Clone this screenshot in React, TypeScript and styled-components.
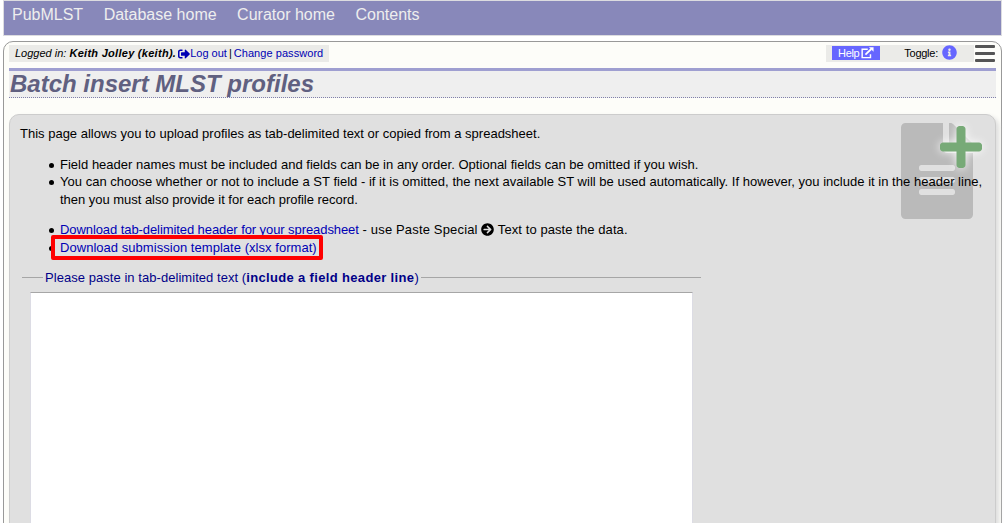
import React from "react";
import styled, { createGlobalStyle } from "styled-components";
import {
  FaArrowCircleRight,
  FaFileAlt,
  FaInfoCircle,
  FaPlus,
  FaSignOutAlt,
} from "react-icons/fa";

const Global = createGlobalStyle`
  * { box-sizing: border-box; }
  body {
    margin: 0;
    background: #fff;
    color: #000;
    font-family: "Liberation Sans", Arial, sans-serif;
    font-size: 13px;
    overflow: hidden;
  }
  a { color: #0000b4; text-decoration: none; }
`;

const Page = styled.div`
  height: 523px;
  padding: 0 3px;
  overflow: hidden;
  display: flex;
  flex-direction: column;
  gap: 5px;
`;

const NavBar = styled.nav`
  flex: none;
  height: 36px;
  background: #8888ba;
  border: 1px solid #dcdce0;
  display: flex;
  gap: 20.5px;
  padding: 4px 8px;
`;

const NavLink = styled.a`
  && { color: #eee; }
  font-size: 16px;
  line-height: 19px;
  white-space: nowrap;
`;

const Frame = styled.main`
  flex: none;
  height: 520px;
  background: #fdfdf9;
  border: 1px solid #999;
  border-radius: 10px;
  padding: 3px 5px;
`;

const TopRow = styled.div`
  display: flex;
  justify-content: space-between;
  height: 17px;
`;

const LoginBox = styled.div`
  width: 320px;
  padding-left: 6px;
  background: #ebebe8;
  font-size: 11px;
  line-height: 17px;
  white-space: nowrap;
  display: flex;
  align-items: center;
`;

const UserName = styled.b`
  letter-spacing: 0.28px;
`;

const LogOut = styled.a`
  display: flex;
  align-items: center;
  margin: 0 2px 0 2px;
`;

const ChangePassword = styled.a`
  margin-left: 2px;
  letter-spacing: 0.06px;
`;

const Tools = styled.div`
  display: flex;
  align-items: center;
  width: 170px;
`;

const ToolStrip = styled.div`
  width: 148px;
  height: 17px;
  padding: 0 17px 0 6px;
  background: #ebebe8;
  display: flex;
  justify-content: space-between;
  align-items: flex-start;
  font-size: 11px;
`;

const HelpButton = styled.a`
  && { color: #fff; }
  width: 48px;
  height: 14px;
  margin-top: 1px;
  padding: 0 6px;
  background: #66f;
  display: flex;
  align-items: center;
  gap: 2px;
  letter-spacing: -0.3px;
`;

const Toggle = styled.span`
  display: flex;
  align-items: center;
  gap: 4px;
  letter-spacing: -0.25px;
  line-height: 16px;
  svg { color: #66f; margin-top: -1px; }
`;

const Burger = styled.div`
  width: 20px;
  height: 17px;
  margin-left: 1px;
  display: flex;
  flex-direction: column;
  justify-content: space-between;
`;

const BurgerBar = styled.span`
  height: 3px;
  border-radius: 1px;
  background: #555;
`;

const Title = styled.h1`
  margin: 6px 0 16px;
  padding-left: 1px;
  height: 30px;
  border-top: 3px solid #9f9fd1;
  border-bottom: 1px dotted #8080aa;
  background: #efefef;
  color: #606080;
  font-size: 24px;
  line-height: 26px;
  font-style: italic;
`;

const Panel = styled.section`
  position: relative;
  height: 460px;
  border: 1px solid #ccc;
  border-radius: 10px;
  background: #e0e0e0;
  box-shadow: 3px 3px 5px #ddd;
  padding: 10px 10px 0;
`;

const DocIcon = styled.div`
  position: absolute;
  top: 8px;
  right: 22px;
  color: #bababa;
  line-height: 0;
  svg { width: 72px; height: 96px; }
`;

const PlusIcon = styled.div`
  position: absolute;
  top: 8px;
  right: 13px;
  color: #7a7;
  line-height: 0;
  svg {
    width: 42px;
    height: 48px;
    overflow: visible;
    filter: drop-shadow(0 0 5px #fff);
  }
`;

const Copy = styled.div`
  position: relative;
`;

const Line = styled.p<{ $spacing?: number; $height?: number }>`
  margin: 0;
  height: ${(p) => p.$height ?? 18}px;
  line-height: 18px;
  white-space: nowrap;
  letter-spacing: ${(p) => p.$spacing ?? 0}px;
`;

const Span = styled.span<{ $spacing: number }>`
  letter-spacing: ${(p) => p.$spacing}px;
`;

const List = styled.ul<{ $gap: number }>`
  list-style: none;
  margin: 0;
  padding: ${(p) => p.$gap}px 0 0 40px;
`;

const Item = styled.li`
  position: relative;
  &::before {
    content: "";
    position: absolute;
    left: -11px;
    top: 7px;
    width: 5px;
    height: 5px;
    border-radius: 50%;
    background: #000;
  }
  svg { vertical-align: -2px; }
`;

const Highlight = styled.div`
  position: absolute;
  left: 31px;
  top: 110px;
  width: 272px;
  height: 25px;
  border: 4px solid #f00;
  border-radius: 2px;
`;

const Fieldset = styled.div`
  width: 679px;
  margin: 12px 0 0 2px;
`;

const Legend = styled.div`
  display: flex;
  align-items: center;
  gap: 2px;
  color: #008;
  white-space: nowrap;
  &::before, &::after {
    content: "";
    height: 1px;
    background: #a6a6a6;
    margin-top: -1px;
  }
  &::before { width: 21px; }
  &::after { flex: 1; }
`;

const TextArea = styled.textarea`
  display: block;
  width: 663px;
  height: 300px;
  margin: 5px 0 0 8px;
  padding: 2px;
  border: 1px solid #dcdce4;
  border-top-color: #a6a6a6;
  background: #fff;
  resize: none;
  outline: none;
`;

const ExternalLink = () => (
  <svg width="13" height="12" viewBox="0 0 13 12" fill="none" stroke="#fff">
    <path d="M7 2.2H1.2v8.6h8.6V7.4" strokeWidth="1.5" />
    <path d="M4.6 7.6 10.6 1.9" strokeWidth="1.9" />
    <path d="M8.2 0H13v4.8z" fill="#fff" stroke="none" />
  </svg>
);

export default function App() {
  return (
    <Page>
      <Global />
      <NavBar>
        <NavLink>PubMLST</NavLink>
        <NavLink>Database home</NavLink>
        <NavLink>Curator home</NavLink>
        <NavLink>Contents</NavLink>
      </NavBar>
      <Frame>
        <TopRow>
          <LoginBox>
            <i>Logged in: <UserName>Keith Jolley (keith).</UserName></i>
            <LogOut href="#"><FaSignOutAlt size={12} />Log out</LogOut>
            |
            <ChangePassword href="#">Change password</ChangePassword>
          </LoginBox>
          <Tools>
            <ToolStrip>
              <HelpButton>Help<ExternalLink /></HelpButton>
              <Toggle>Toggle: <FaInfoCircle size={15} /></Toggle>
            </ToolStrip>
            <Burger><BurgerBar /><BurgerBar /><BurgerBar /></Burger>
          </Tools>
        </TopRow>
        <Title>Batch insert MLST profiles</Title>
        <Panel>
          <DocIcon><FaFileAlt /></DocIcon>
          <PlusIcon><FaPlus /></PlusIcon>
          <Copy>
            <Line>This page allows you to upload profiles as tab-delimited text or copied from a spreadsheet.</Line>
            <List $gap={13}>
              <Item>
                <Line $spacing={0.015} $height={17}>Field header names must be included and fields can be in any order. Optional fields can be omitted if you wish.</Line>
              </Item>
              <Item>
                <Line $spacing={0.02}>You can choose whether or not to include a ST field - if it is omitted, the next available ST will be used automatically. If however, you include it in the header line,</Line>
                <Line $spacing={-0.025}>then you must also provide it for each profile record.</Line>
              </Item>
            </List>
            <List $gap={12}>
              <Item>
                <Line>
                  <Span $spacing={-0.08}><a href="#">Download tab-delimited header for your spreadsheet</a></Span>
                  <Span $spacing={0.16}> - use Paste Special </Span>
                  <FaArrowCircleRight size={13} />
                  <Span $spacing={0.08}> Text to paste the data.</Span>
                </Line>
              </Item>
              <Item><Line $spacing={0.04}><a href="#">Download submission template (xlsx format)</a></Line></Item>
            </List>
            <Highlight />
          </Copy>
          <Fieldset>
            <Legend>
              <Line $spacing={0.05}>Please paste in tab-delimited text (<Span as="b" $spacing={0.34}>include a field header line</Span>)</Line>
            </Legend>
            <TextArea />
          </Fieldset>
        </Panel>
      </Frame>
    </Page>
  );
}
